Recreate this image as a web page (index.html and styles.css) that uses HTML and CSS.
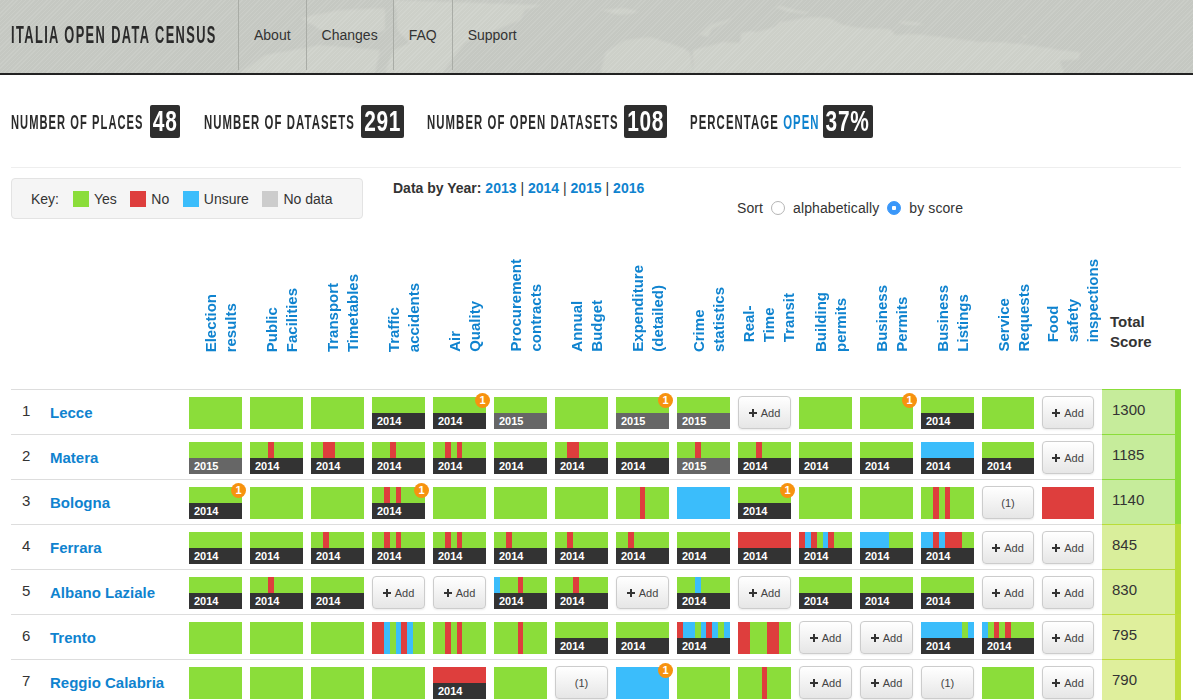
FILE: index.html
```html
<!DOCTYPE html>
<html lang="en">
<head>
  <meta charset="UTF-8" />
  <meta name="viewport" content="width=device-width, initial-scale=1.0" />
  <title>Italia Open Data Census</title>
  <link rel="stylesheet" href="styles.css">
</head>
<body>
  <header class="topbar">
    <svg class="worldmap" viewBox="0 0 1193 73" preserveAspectRatio="none" aria-hidden="true">
      <path d="M693 50 723 42 740 43 741 33 750 31 756 32 775 27 780 22 810 17 830 18 843 25 860 28 890 29 895 35 915 34 950 38 980 42 1000 42 1030 45 1060 50 1080 52 1079 59 1060 61 1064 73 693 73Z"/>
      <path d="M699 35 712 24 733 18 725 23 712 29 708 37Z"/>
      <path d="M775 7 782 6 795 10 810 12 803 14 785 11Z"/>
      <path d="M898 21 915 22 925 25 905 25Z"/>
      <path d="M1020 35 1028 36 1025 38Z"/>
      <path d="M600 73 606 52 625 40 650 37 672 44 683 48 690 52 693 73Z"/>
      <path d="M393 0 543 5 525 10 520 20 465 43 452 60 443 73 385 73 393 50 410 43 397 30 397 13Z"/>
      <path d="M300 18 340 10 385 8 385 30 360 40 330 35Z"/>
      <path d="M240 73 265 55 320 45 380 50 375 73Z"/>
      <path d="M600 10 625 8 640 12 620 15Z"/>
    </svg>
    <a class="brand" href="#"><span>Italia Open Data Census</span></a>
    <nav class="mainnav">
      <a href="#">About</a>
      <a href="#">Changes</a>
      <a href="#">FAQ</a>
      <a href="#">Support</a>
    </nav>
  </header>

  <main class="page">
    <section class="stats">
      <div class="stat"><span class="label s1"><span>Number of places</span></span><span class="count w30"><b>48</b></span></div>
      <div class="stat"><span class="label s2"><span>Number of datasets</span></span><span class="count w43"><b>291</b></span></div>
      <div class="stat"><span class="label s3"><span>Number of open datasets</span></span><span class="count w43"><b>108</b></span></div>
      <div class="stat"><span class="label s4"><span>Percentage <em>open</em></span></span><span class="count w50"><b>37%</b></span></div>
    </section>

    <section class="controls">
      <div class="key">
        <span class="key-title">Key:</span>
        <span class="key-item"><i class="swatch yes"></i>Yes</span>
        <span class="key-item"><i class="swatch no"></i>No</span>
        <span class="key-item"><i class="swatch unsure"></i>Unsure</span>
        <span class="key-item"><i class="swatch nodata"></i>No data</span>
      </div>
      <div class="years"><strong>Data by Year:</strong> <a href="#">2013</a> | <a href="#">2014</a> | <a href="#">2015</a> | <a href="#">2016</a></div>
      <form class="sort">
        <span>Sort</span>
        <label><input type="radio" name="sort" /> alphabetically</label>
        <label><input type="radio" name="sort" checked /> by score</label>
      </form>
    </section>

    <table class="census">
      <colgroup>
        <col class="c-rank"><col class="c-name">
        <col class="c-data"><col class="c-data"><col class="c-data"><col class="c-data"><col class="c-data">
        <col class="c-data"><col class="c-data"><col class="c-data"><col class="c-data"><col class="c-data">
        <col class="c-data"><col class="c-data"><col class="c-data">
        <col class="c-service"><col class="c-food"><col class="c-score">
      </colgroup>
      <thead>
        <tr>
          <th></th><th></th>
          <th><a class="rot" href="#">Election<br>results</a></th>
          <th><a class="rot" href="#">Public<br>Facilities</a></th>
          <th><a class="rot" href="#">Transport<br>Timetables</a></th>
          <th><a class="rot" href="#">Traffic<br>accidents</a></th>
          <th><a class="rot" href="#">Air<br>Quality</a></th>
          <th><a class="rot" href="#">Procurement<br>contracts</a></th>
          <th><a class="rot" href="#">Annual<br>Budget</a></th>
          <th><a class="rot" href="#">Expenditure<br>(detailed)</a></th>
          <th><a class="rot" href="#">Crime<br>statistics</a></th>
          <th><a class="rot rot3" href="#">Real-<br>Time<br>Transit</a></th>
          <th><a class="rot" href="#">Building<br>permits</a></th>
          <th><a class="rot" href="#">Business<br>Permits</a></th>
          <th><a class="rot" href="#">Business<br>Listings</a></th>
          <th><a class="rot" href="#">Service<br>Requests</a></th>
          <th><a class="rot rot3" href="#">Food<br>safety<br>inspections</a></th>
          <th class="total">Total<br>Score</th>
        </tr>
      </thead>
      <tbody>
        <tr>
          <td class="rank">1</td><td class="place"><a href="#">Lecce</a></td>
          <td><div class="cell"></div></td>
          <td><div class="cell"></div></td>
          <td><div class="cell"></div></td>
          <td><div class="cell"><div class="segs"></div><b class="yr">2014</b></div></td>
          <td><div class="cell"><div class="segs"></div><b class="yr">2014</b><b class="flag">1</b></div></td>
          <td><div class="cell"><div class="segs"></div><b class="yr old">2015</b></div></td>
          <td><div class="cell"></div></td>
          <td><div class="cell"><div class="segs"></div><b class="yr old">2015</b><b class="flag">1</b></div></td>
          <td><div class="cell"><div class="segs"></div><b class="yr old">2015</b></div></td>
          <td><a class="add" href="#"><i class="plus"></i>Add</a></td>
          <td><div class="cell"></div></td>
          <td><div class="cell"><b class="flag">1</b></div></td>
          <td><div class="cell"><div class="segs"></div><b class="yr">2014</b></div></td>
          <td><div class="cell"></div></td>
          <td class="last"><a class="add" href="#"><i class="plus"></i>Add</a></td>
          <td class="score high">1300</td>
        </tr>
        <tr>
          <td class="rank">2</td><td class="place"><a href="#">Matera</a></td>
          <td><div class="cell"><div class="segs"></div><b class="yr old">2015</b></div></td>
          <td><div class="cell"><div class="segs"><i class="u3"></i><i class="r"></i><i class="u5"></i></div><b class="yr">2014</b></div></td>
          <td><div class="cell"><div class="segs"><i class="u2"></i><i class="r u2"></i><i class="u5"></i></div><b class="yr">2014</b></div></td>
          <td><div class="cell"><div class="segs"><i class="u3"></i><i class="r"></i><i class="u5"></i></div><b class="yr">2014</b></div></td>
          <td><div class="cell"><div class="segs"><i class="u2"></i><i class="r"></i><i></i><i class="r"></i><i class="u4"></i></div><b class="yr">2014</b></div></td>
          <td><div class="cell"><div class="segs"></div><b class="yr">2014</b></div></td>
          <td><div class="cell"><div class="segs"><i class="u2"></i><i class="r u2"></i><i class="u5"></i></div><b class="yr">2014</b></div></td>
          <td><div class="cell"><div class="segs"></div><b class="yr">2014</b></div></td>
          <td><div class="cell"><div class="segs"><i class="u3"></i><i class="r"></i><i class="u5"></i></div><b class="yr old">2015</b></div></td>
          <td><div class="cell"><div class="segs"><i class="u3"></i><i class="r"></i><i class="u5"></i></div><b class="yr">2014</b></div></td>
          <td><div class="cell"><div class="segs"></div><b class="yr">2014</b></div></td>
          <td><div class="cell"><div class="segs"></div><b class="yr">2014</b></div></td>
          <td><div class="cell"><div class="segs"><i class="b"></i></div><b class="yr">2014</b></div></td>
          <td><div class="cell"><div class="segs"></div><b class="yr">2014</b></div></td>
          <td class="last"><a class="add" href="#"><i class="plus"></i>Add</a></td>
          <td class="score high">1185</td>
        </tr>
        <tr>
          <td class="rank">3</td><td class="place"><a href="#">Bologna</a></td>
          <td><div class="cell"><div class="segs"></div><b class="yr">2014</b><b class="flag">1</b></div></td>
          <td><div class="cell"></div></td>
          <td><div class="cell"></div></td>
          <td><div class="cell"><div class="segs"><i class="u2"></i><i class="r"></i><i></i><i class="r"></i><i class="u4"></i></div><b class="yr">2014</b><b class="flag">1</b></div></td>
          <td><div class="cell"></div></td>
          <td><div class="cell"></div></td>
          <td><div class="cell"></div></td>
          <td><div class="cell"><div class="segs"><i class="u4"></i><i class="r"></i><i class="u4"></i></div></div></td>
          <td><div class="cell"><div class="segs"><i class="b"></i></div></div></td>
          <td><div class="cell"><div class="segs"></div><b class="yr">2014</b><b class="flag">1</b></div></td>
          <td><div class="cell"></div></td>
          <td><div class="cell"></div></td>
          <td><div class="cell"><div class="segs"><i class="u2"></i><i class="r"></i><i></i><i class="r"></i><i class="u4"></i></div></div></td>
          <td><a class="add" href="#">(1)</a></td>
          <td class="last"><div class="cell"><div class="segs"><i class="r"></i></div></div></td>
          <td class="score high">1140</td>
        </tr>
        <tr>
          <td class="rank">4</td><td class="place"><a href="#">Ferrara</a></td>
          <td><div class="cell"><div class="segs"></div><b class="yr">2014</b></div></td>
          <td><div class="cell"><div class="segs"></div><b class="yr">2014</b></div></td>
          <td><div class="cell"><div class="segs"><i class="u2"></i><i class="r"></i><i class="u6"></i></div><b class="yr">2014</b></div></td>
          <td><div class="cell"><div class="segs"><i class="u2"></i><i class="r"></i><i></i><i class="r"></i><i class="u4"></i></div><b class="yr">2014</b></div></td>
          <td><div class="cell"><div class="segs"><i class="u2"></i><i class="r"></i><i></i><i class="r"></i><i class="u4"></i></div><b class="yr">2014</b></div></td>
          <td><div class="cell"><div class="segs"><i class="u2"></i><i class="r"></i><i class="u6"></i></div><b class="yr">2014</b></div></td>
          <td><div class="cell"><div class="segs"><i class="u2"></i><i class="r"></i><i class="u6"></i></div><b class="yr">2014</b></div></td>
          <td><div class="cell"><div class="segs"><i class="u2"></i><i class="r"></i><i class="u6"></i></div><b class="yr">2014</b></div></td>
          <td><div class="cell"><div class="segs"></div><b class="yr">2014</b></div></td>
          <td><div class="cell"><div class="segs"><i class="r"></i></div><b class="yr">2014</b></div></td>
          <td><div class="cell"><div class="segs"><i class="r"></i><i class="b"></i><i class="r"></i><i></i><i class="b"></i><i class="r"></i><i class="u3"></i></div><b class="yr">2014</b></div></td>
          <td><div class="cell"><div class="segs"><i class="b u5"></i><i class="u4"></i></div><b class="yr">2014</b></div></td>
          <td><div class="cell"><div class="segs"><i class="b u2"></i><i class="r"></i><i class="b"></i><i class="r u3"></i><i class="u2"></i></div><b class="yr">2014</b></div></td>
          <td><a class="add" href="#"><i class="plus"></i>Add</a></td>
          <td class="last"><a class="add" href="#"><i class="plus"></i>Add</a></td>
          <td class="score mid">845</td>
        </tr>
        <tr>
          <td class="rank">5</td><td class="place"><a href="#">Albano Laziale</a></td>
          <td><div class="cell"><div class="segs"></div><b class="yr">2014</b></div></td>
          <td><div class="cell"><div class="segs"><i class="u3"></i><i class="r"></i><i class="u5"></i></div><b class="yr">2014</b></div></td>
          <td><div class="cell"><div class="segs"></div><b class="yr">2014</b></div></td>
          <td><a class="add" href="#"><i class="plus"></i>Add</a></td>
          <td><a class="add" href="#"><i class="plus"></i>Add</a></td>
          <td><div class="cell"><div class="segs"><i class="b"></i><i class="u3"></i><i class="r"></i><i class="u4"></i></div><b class="yr">2014</b></div></td>
          <td><div class="cell"><div class="segs"><i class="u3"></i><i class="r"></i><i class="u5"></i></div><b class="yr">2014</b></div></td>
          <td><a class="add" href="#"><i class="plus"></i>Add</a></td>
          <td><div class="cell"><div class="segs"><i class="u3"></i><i class="b"></i><i class="u5"></i></div><b class="yr">2014</b></div></td>
          <td><a class="add" href="#"><i class="plus"></i>Add</a></td>
          <td><div class="cell"><div class="segs"></div><b class="yr">2014</b></div></td>
          <td><div class="cell"><div class="segs"></div><b class="yr">2014</b></div></td>
          <td><div class="cell"><div class="segs"></div><b class="yr">2014</b></div></td>
          <td><a class="add" href="#"><i class="plus"></i>Add</a></td>
          <td class="last"><a class="add" href="#"><i class="plus"></i>Add</a></td>
          <td class="score mid">830</td>
        </tr>
        <tr>
          <td class="rank">6</td><td class="place"><a href="#">Trento</a></td>
          <td><div class="cell"></div></td>
          <td><div class="cell"></div></td>
          <td><div class="cell"></div></td>
          <td><div class="cell"><div class="segs"><i class="r u2"></i><i class="b"></i><i></i><i class="b"></i><i class="r"></i><i class="b"></i><i class="u2"></i></div></div></td>
          <td><div class="cell"><div class="segs"><i class="u2"></i><i class="r"></i><i></i><i class="r"></i><i class="u4"></i></div></div></td>
          <td><div class="cell"><div class="segs"><i class="u4"></i><i class="r"></i><i class="u4"></i></div></div></td>
          <td><div class="cell"><div class="segs"></div><b class="yr">2014</b></div></td>
          <td><div class="cell"><div class="segs"></div><b class="yr">2014</b></div></td>
          <td><div class="cell"><div class="segs"><i class="r"></i><i class="b u2"></i><i></i><i class="b"></i><i class="r"></i><i class="b"></i><i></i><i class="b"></i></div><b class="yr">2014</b></div></td>
          <td><div class="cell"><div class="segs"><i class="r u2"></i><i class="u3"></i><i class="r u2"></i><i class="u2"></i></div></div></td>
          <td><a class="add" href="#"><i class="plus"></i>Add</a></td>
          <td><a class="add" href="#"><i class="plus"></i>Add</a></td>
          <td><div class="cell"><div class="segs"><i class="b u7"></i><i></i><i class="b"></i></div><b class="yr">2014</b></div></td>
          <td><div class="cell"><div class="segs"><i class="b"></i><i></i><i class="r"></i><i></i><i class="r"></i><i class="u4"></i></div><b class="yr">2014</b></div></td>
          <td class="last"><a class="add" href="#"><i class="plus"></i>Add</a></td>
          <td class="score low">795</td>
        </tr>
        <tr>
          <td class="rank">7</td><td class="place"><a href="#">Reggio Calabria</a></td>
          <td><div class="cell"></div></td>
          <td><div class="cell"></div></td>
          <td><div class="cell"></div></td>
          <td><div class="cell"></div></td>
          <td><div class="cell"><div class="segs"><i class="r"></i></div><b class="yr">2014</b></div></td>
          <td><div class="cell"></div></td>
          <td><a class="add" href="#">(1)</a></td>
          <td><div class="cell"><div class="segs"><i class="b"></i></div><b class="flag">1</b></div></td>
          <td><div class="cell"></div></td>
          <td><div class="cell"><div class="segs"><i class="u4"></i><i class="r"></i><i class="u4"></i></div></div></td>
          <td><a class="add" href="#"><i class="plus"></i>Add</a></td>
          <td><a class="add" href="#"><i class="plus"></i>Add</a></td>
          <td><a class="add" href="#">(1)</a></td>
          <td><div class="cell"></div></td>
          <td class="last"><a class="add" href="#"><i class="plus"></i>Add</a></td>
          <td class="score low">790</td>
        </tr>
      </tbody>
    </table>
  </main>
</body>
</html>
```

FILE: styles.css
```css
html, body {
  height: 700px;
  overflow: hidden;
}
body {
  margin: 0;
  font-family: "Liberation Sans", Arial, sans-serif;
  font-size: 14px;
  color: #333;
  background: #fff;
}
a {
  color: #0f83cf;
  text-decoration: none;
}

/* top bar */
.topbar {
  position: relative;
  display: flex;
  height: 73px;
  padding-left: 11px;
  overflow: hidden;
  background: #c8cbc5;
  border-bottom: 2px solid #222;
}
.topbar::after {
  content: "";
  position: absolute;
  inset: 0;
  background: repeating-linear-gradient(135deg, rgba(255,255,255,0.05) 0 1px, rgba(0,0,0,0.015) 1px 3px);
}
.worldmap {
  position: absolute;
  inset: 0;
  width: 100%;
  height: 100%;
  fill: #d0d3cc;
  filter: blur(1px);
}
.brand {
  position: relative;
  z-index: 1;
  flex: none;
  width: 227px;
  font-weight: bold;
  font-size: 23px;
  line-height: 71px;
  letter-spacing: 2.5px;
  text-transform: uppercase;
  color: #2b2b2b;
  white-space: nowrap;
}
/* no condensed face is installed, so the display type is squeezed */
.brand span {
  display: inline-block;
  transform: scaleX(0.558);
  transform-origin: left center;
}
.mainnav {
  position: relative;
  z-index: 1;
  display: flex;
  height: 70px;
}
.mainnav a {
  padding: 0 15px;
  line-height: 70px;
  color: #333;
  border-left: 1px solid #a9aca6;
}

.page {
  padding: 0 12px 0 11px;
}

/* summary numbers */
.stats {
  display: flex;
  height: 33px;
  margin-top: 30px;
  padding-bottom: 29px;
  gap: 23px;
  border-bottom: 1px solid #eee;
}
.stat {
  display: flex;
  align-items: center;
  gap: 6px;
  font-weight: bold;
  color: #2b2b2b;
}
.label {
  font-size: 21px;
  letter-spacing: 2px;
  text-transform: uppercase;
  white-space: nowrap;
}
.label span {
  display: inline-block;
  transform: scaleX(0.541);
  transform-origin: left center;
}
.s1 { width: 133px; }
.s2 { width: 151px; }
.s3 { width: 191px; }
.s4 { width: 127px; }
.s1 span { transform: scaleX(0.53); }
.label em {
  font-style: normal;
  color: #0f83cf;
}
.count {
  display: flex;
  justify-content: center;
  height: 33px;
  font-size: 29px;
  line-height: 33px;
  letter-spacing: 1px;
  color: #fff;
  background: #2e2e2e;
  border-radius: 2px;
}
.count b {
  transform: scaleX(0.72);
  white-space: nowrap;
}
.w30 { width: 30px; margin-right: 1px; }
.w43 { width: 43px; }
.w50 { width: 50px; }

/* key, years, sort */
.controls {
  display: grid;
  grid-template-columns: 382px 344px auto;
  height: 61px;
  margin-top: 10px;
}
.key {
  display: flex;
  align-items: center;
  box-sizing: border-box;
  width: 352px;
  height: 41px;
  padding-left: 19px;
  background: #f5f5f5;
  border: 1px solid #e3e3e3;
  border-radius: 4px;
}
.key-title {
  margin-right: 14px;
}
.key-item {
  display: flex;
  align-items: center;
  margin-right: 13.5px;
}
.swatch {
  width: 16px;
  height: 16px;
  margin-right: 5px;
}
.yes { background: #8bdd3a; }
.no { background: #de3e3d; }
.unsure { background: #3bbdfb; }
.nodata { background: #ccc; }
.years {
  line-height: 20px;
}
.years a {
  font-weight: bold;
}
.sort {
  display: flex;
  gap: 7px;
  height: 20px;
  margin-top: 20px;
  line-height: 20px;
  letter-spacing: 0.1px;
}
.sort label {
  display: flex;
  align-items: center;
  gap: 8px;
}
.sort input {
  appearance: none;
  width: 14px;
  height: 14px;
  margin: 0 0 0 1px;
  background: #fff;
  border: 1px solid #b5b5b5;
  border-radius: 50%;
}
.sort input:checked {
  background: radial-gradient(circle, #fff 0 2px, #3a97f9 2.5px);
  border-color: #3a97f9;
}

/* census table */
.census {
  width: 1170px;
  table-layout: fixed;
  border-collapse: separate;
  border-spacing: 0;
}
.c-rank { width: 39px; }
.c-name { width: 135px; }
.c-data { width: 61px; }
.c-service { width: 60px; }
.c-food { width: 64px; }
.c-score { width: 79px; }
.census th {
  box-sizing: border-box;
  height: 150px;
  padding: 0;
  vertical-align: bottom;
  text-align: left;
}
.rot {
  display: block;
  width: max-content;
  margin: 0 0 37px 16px;
  writing-mode: vertical-rl;
  transform: rotate(180deg);
  font-size: 15px;
  line-height: 20px;
  white-space: nowrap;
}
.rot3 {
  margin: 0 0 47px 5px;
}
.census th.total {
  padding: 0 0 37px 8px;
  font-size: 15px;
  line-height: 20px;
}
.census td {
  height: 32px;
  padding: 7px 4px 5px;
  vertical-align: top;
  border-top: 1px solid #ddd;
}
.census td.last {
  padding-right: 8px;
}
.census td.rank {
  height: 32px;
  padding: 12px 0 0 11px;
  font-size: 15px;
  line-height: 18px;
}
.census td.place {
  height: 30px;
  padding: 14px 0 0;
  font-size: 15px;
  font-weight: bold;
  line-height: 18px;
  white-space: nowrap;
}
.census td.score {
  height: 33px;
  padding: 11px 0 0 10px;
  font-size: 15px;
  line-height: 18px;
  border-right: 6px solid;
}
.census td.high { background: #c6ec9b; border-color: #8bdd3a; }
.census td.mid { background: #d9ee9b; border-color: #b9dd38; }
.census td.low { background: #dfef9c; border-color: #bfdd38; }

.cell {
  position: relative;
  display: flex;
  flex-direction: column;
  height: 32px;
  background: #8bdd3a;
}
.segs {
  display: flex;
  flex: 1;
}
.segs i {
  flex: 1 1 0;
}
.segs .u2 { flex-grow: 2; }
.segs .u3 { flex-grow: 3; }
.segs .u4 { flex-grow: 4; }
.segs .u5 { flex-grow: 5; }
.segs .u6 { flex-grow: 6; }
.segs .u7 { flex-grow: 7; }
.segs .r { background: #de3e3d; }
.segs .b { background: #3bbdfb; }
.yr {
  height: 16px;
  padding-left: 5px;
  font-size: 11px;
  line-height: 17px;
  color: #fff;
  background: #333;
}
.yr.old {
  background: #666;
}
.flag {
  position: absolute;
  top: -4px;
  right: -4px;
  width: 15px;
  height: 15px;
  font-size: 11px;
  line-height: 15px;
  text-align: center;
  color: #fff;
  background: #f7920f;
  border-radius: 50%;
}
.add {
  display: flex;
  align-items: center;
  justify-content: center;
  box-sizing: border-box;
  height: 33px;
  margin-top: -1px;
  font-size: 11px;
  color: #444;
  background: linear-gradient(#fff, #e6e6e6);
  border: 1px solid #ccc;
  border-radius: 4px;
  box-shadow: 0 1px 2px rgba(0,0,0,0.08);
}
.plus {
  width: 8px;
  height: 8px;
  margin-right: 4px;
  background:
    linear-gradient(#333, #333) center / 8px 2px no-repeat,
    linear-gradient(#333, #333) center / 2px 8px no-repeat;
}
```
